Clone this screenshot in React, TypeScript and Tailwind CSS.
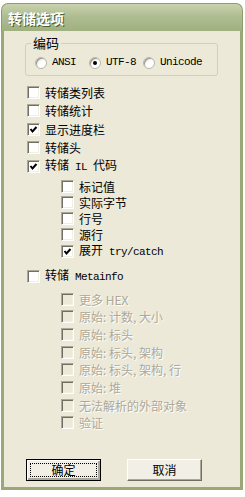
import React from 'react';

const cjk = "font-['Noto_Sans_CJK_SC',sans-serif]";
const mono = "font-['Liberation_Mono','Noto_Sans_CJK_SC',monospace] text-[11px] leading-[13px] tracking-[-0.6px]";

function Check({ checked, disabled }: { checked?: boolean; disabled?: boolean }) {
  return (
    <span
      className={`flex h-[13px] w-[13px] shrink-0 items-center justify-center border border-t-[#aca899] border-l-[#aca899] border-r-white border-b-white shadow-[inset_1px_1px_0_#716f64,inset_-1px_-1px_0_#f1efe2] ${
        disabled ? 'bg-[#ece9d8]' : 'bg-white'
      }`}
    >
      {checked && (
        <svg width="9" height="9" viewBox="0 0 9 9">
          <polyline points="1.5,4 3.5,6.5 7.5,2" fill="none" stroke="#000" strokeWidth="2" />
        </svg>
      )}
    </span>
  );
}

function Radio({ label, selected }: { label: string; selected?: boolean }) {
  return (
    <div className="flex w-[54px] items-center gap-[5px]">
      <span className="flex h-[12px] w-[12px] shrink-0 items-center justify-center rounded-full border border-[#b8b6a8] bg-gradient-to-br from-[#dcdad0] via-white to-white shadow-[inset_1px_1px_0_#9d9b8e]">
        {selected && <span className="h-[4px] w-[4px] rounded-full bg-black" />}
      </span>
      <span className={`${mono} text-black`}>{label}</span>
    </div>
  );
}

function Row({
  children,
  checked,
  disabled,
  h,
  indent,
}: {
  children: React.ReactNode;
  checked?: boolean;
  disabled?: boolean;
  h: string;
  indent?: boolean;
}) {
  return (
    <div className={`flex items-center gap-[5px] ${h} ${indent ? 'pl-[36px]' : 'pl-[2px]'}`}>
      <Check checked={checked} disabled={disabled} />
      <span
        className={`whitespace-pre text-[12px] leading-[13px] ${
          disabled ? 'text-[#aca899] [text-shadow:1px_1px_0_#ffffff]' : 'text-black'
        }`}
      >
        {children}
      </span>
    </div>
  );
}

export default function App() {
  const disabledItems = [
    '更多 HEX',
    '原始: 计数, 大小',
    '原始: 标头',
    '原始: 标头, 架构',
    '原始: 标头, 架构, 行',
    '原始: 堆',
    '无法解析的外部对象',
    '验证',
  ];

  return (
    <div className={`h-[497px] w-[245px] overflow-hidden bg-white pl-[1px] pt-[3px] ${cjk}`}>
      <div className="flex h-[487px] w-[242px] flex-col">
        <div className="flex h-[28px] items-center rounded-t-[7px] border-x border-t border-[#8f9d6b] bg-gradient-to-b from-[#c9d2ad] via-[#adbb8f] to-[#a1b07f] pl-[6px]">
          <span className="text-[14px] font-bold leading-none text-white [text-shadow:1px_1px_0_#4f5d30]">转储选项</span>
        </div>
        <div className="flex-1 border-x-[3px] border-b-[3px] border-[#9aa878] bg-[#ece9d8] pl-[21px]">
          <fieldset className="mt-[5px] w-[193px] rounded-[3px] border border-[#d0d0bf] pb-[6px] pl-[9px] pt-[6px]">
            <legend className="-ml-[4px] px-[2px] text-[13px] leading-[14px] text-black">编码</legend>
            <div className="flex h-[13px] items-center">
              <Radio label="ANSI" />
              <Radio label="UTF-8" selected />
              <Radio label="Unicode" />
            </div>
          </fieldset>

          <div className="mt-[7px]">
            <Row h="h-[18.5px]">转储类列表</Row>
            <Row h="h-[18.5px]">转储统计</Row>
            <Row h="h-[18.5px]" checked>显示进度栏</Row>
            <Row h="h-[18.5px]">转储头</Row>
            <Row h="h-[18.5px]" checked>
              转储<span className={mono}> IL </span>代码
            </Row>
          </div>

          <div className="mt-[2.5px]">
            <Row h="h-[16.25px]" indent>标记值</Row>
            <Row h="h-[16.25px]" indent>实际字节</Row>
            <Row h="h-[16.25px]" indent>行号</Row>
            <Row h="h-[16.25px]" indent>源行</Row>
            <Row h="h-[16.25px]" indent checked>
              展开<span className={mono}> try/catch</span>
            </Row>
          </div>

          <div className="mt-[7.5px]">
            <Row h="h-[18.5px]">
              转储<span className={mono}> Metainfo</span>
            </Row>
          </div>

          <div className="mt-[5px]">
            {disabledItems.map((t) => (
              <Row key={t} h="h-[17.7px]" indent disabled>
                {t}
              </Row>
            ))}
          </div>

          <div className="ml-[1px] mt-[27px] flex gap-[26px]">
            <button className="flex h-[22px] w-[75px] items-center justify-center border border-black bg-[#f1efe6] p-[3px] shadow-[inset_1px_1px_0_#ffffff,inset_-2px_-2px_0_#aca899]">
              <span className="flex h-full w-full items-center justify-center border border-dotted border-black text-[12px] leading-none text-black">
                确定
              </span>
            </button>
            <button className="flex h-[22px] w-[75px] items-center justify-center border border-t-white border-l-white border-r-[#716f64] border-b-[#716f64] bg-[#f1efe6] text-[12px] leading-none text-black shadow-[inset_-1px_-1px_0_#aca899]">
              取消
            </button>
          </div>
        </div>
      </div>
    </div>
  );
}
